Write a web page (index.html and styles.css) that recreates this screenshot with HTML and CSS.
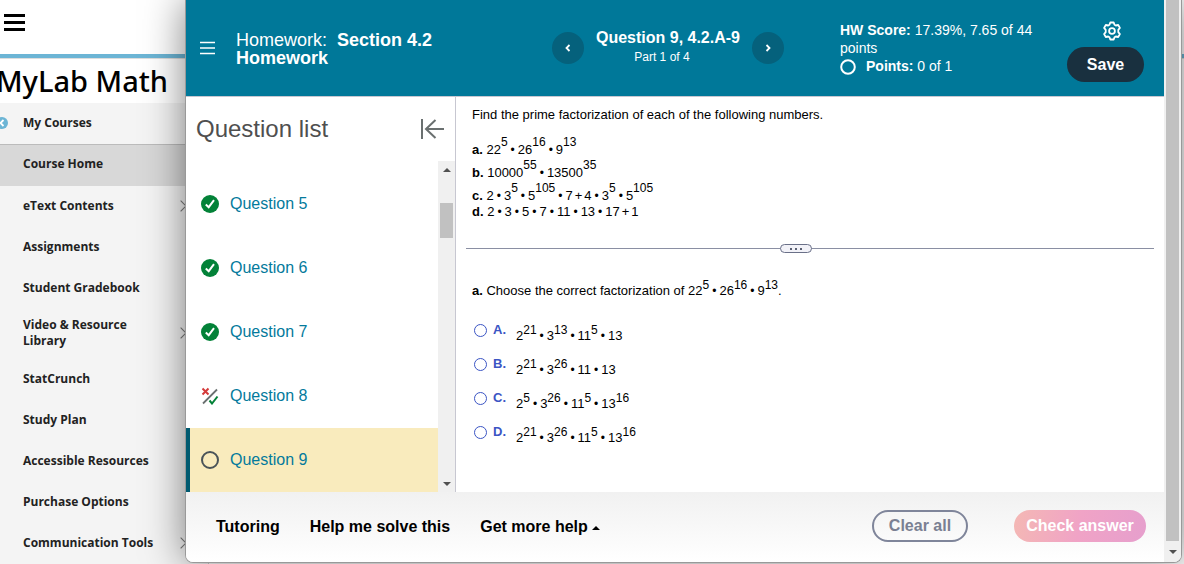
FILE: index.html
```html
<!DOCTYPE html>
<html lang="en">
<head>
  <meta charset="UTF-8">
  <meta name="viewport" content="width=device-width, initial-scale=1.0">
  <title>MyLab Math | Homework</title>
  <link rel="stylesheet" href="styles.css">
</head>
<body>
  <!-- Course site -->
  <div class="site">
    <div class="site-bar">
      <button class="site-menu" aria-label="Menu">
        <svg width="21" height="18" viewBox="0 0 21 18"><path d="M0 1.500h21M0 8.500h21M0 15.500h21" stroke="#000" stroke-width="3"/></svg>
      </button>
    </div>
    <div class="site-main">
      <div class="sidebar">
        <h2 class="brand">MyLab Math</h2>
        <nav class="side-nav">
          <a class="side-link back" href="#">
            <svg class="back-icon" width="12" height="12" viewBox="0 0 12 12"><circle cx="6" cy="6" r="6" fill="#6cb5d5"/><path d="M7.500 3L4.500 6l3 3" fill="none" stroke="#fff" stroke-width="1.800"/></svg>
            My Courses
          </a>
          <a class="side-link current" href="#">Course Home</a>
          <a class="side-link more" href="#">eText Contents</a>
          <a class="side-link" href="#">Assignments</a>
          <a class="side-link" href="#">Student Gradebook</a>
          <a class="side-link tall more" href="#">Video &amp; Resource Library</a>
          <a class="side-link" href="#">StatCrunch</a>
          <a class="side-link" href="#">Study Plan</a>
          <a class="side-link" href="#">Accessible Resources</a>
          <a class="side-link" href="#">Purchase Options</a>
          <a class="side-link more" href="#">Communication Tools</a>
        </nav>
      </div>
      <div class="site-content"></div>
    </div>
  </div>

  <!-- Homework player, opened over the course site -->
  <div class="player">
    <div class="player-body">
      <header class="player-header">
        <button class="menu-button" aria-label="Open menu">
          <svg width="15" height="14" viewBox="0 0 15 14"><path d="M0 1.500h15M0 7h15M0 12.500h15" stroke="#fff" stroke-width="1.500"/></svg>
        </button>
        <div class="hw-title">
          <h1><span>Homework:&nbsp;</span> Section 4.2 Homework</h1>
        </div>
        <div class="pager">
          <button class="round-button" aria-label="Previous question">
            <svg width="8" height="10" viewBox="0 0 8 10"><path d="M5.500 2L2.500 5l3 3" fill="none" stroke="#fff" stroke-width="1.800"/></svg>
          </button>
          <div class="pager-text">
            <strong>Question 9, 4.2.A-9</strong>
            <span>Part 1 of 4</span>
          </div>
          <button class="round-button" aria-label="Next question">
            <svg width="8" height="10" viewBox="0 0 8 10"><path d="M2.500 2l3 3-3 3" fill="none" stroke="#fff" stroke-width="1.800"/></svg>
          </button>
        </div>
        <div class="score">
          <p><strong>HW Score:</strong> 17.39%, 7.65 of 44 points</p>
          <p class="points">
            <svg width="16" height="18" viewBox="0 0 16 18"><circle cx="8" cy="10" r="6.800" fill="none" stroke="#fff" stroke-width="2"/></svg>
            <span><strong>Points:</strong> 0 of 1</span>
          </p>
        </div>
        <div class="actions">
          <button class="gear" aria-label="Settings">
            <svg width="20" height="20" viewBox="0 0 20 20" fill="none" stroke="#fff" stroke-width="1.800" stroke-linejoin="round">
              <path d="M8.300 1.500h3.400l.8 2.300 1.300.7 2.400-.5 1.700 2.900-1.600 1.900v2.400l1.600 1.900-1.700 2.900-2.400-.5-1.300.7-.8 2.300H8.300l-.8-2.300-1.300-.7-2.400.5-1.700-2.900 1.600-1.900V8.800L2.100 6.900 3.800 4l2.400.5 1.300-.7z"/>
              <circle cx="10" cy="10" r="2.900"/>
            </svg>
          </button>
          <button class="save">Save</button>
        </div>
      </header>

      <div class="workspace">
        <!-- Question list -->
        <aside class="questions">
          <div class="questions-head">
            <h2>Question list</h2>
            <button class="collapse" aria-label="Collapse question list">
              <svg width="24" height="20" viewBox="0 0 24 20" fill="none" stroke="#6a7070" stroke-width="2"><path d="M2 0v20M24 10H6M15.500 1L6 10l9.500 9"/></svg>
            </button>
          </div>
          <div class="list-wrap">
            <div class="list">
              <a class="question" href="#">
                <svg width="18" height="18" viewBox="0 0 18 18"><circle cx="9" cy="9" r="9" fill="#038238"/><path d="M4.800 9.500l2.900 2.700L13 5.200" fill="none" stroke="#fff" stroke-width="2"/></svg>
                Question 5
              </a>
              <a class="question" href="#">
                <svg width="18" height="18" viewBox="0 0 18 18"><circle cx="9" cy="9" r="9" fill="#038238"/><path d="M4.800 9.500l2.900 2.700L13 5.200" fill="none" stroke="#fff" stroke-width="2"/></svg>
                Question 6
              </a>
              <a class="question" href="#">
                <svg width="18" height="18" viewBox="0 0 18 18"><circle cx="9" cy="9" r="9" fill="#038238"/><path d="M4.800 9.500l2.900 2.700L13 5.200" fill="none" stroke="#fff" stroke-width="2"/></svg>
                Question 7
              </a>
              <a class="question" href="#">
                <svg width="18" height="18" viewBox="0 0 18 18" fill="none"><path d="M2 16.500L16 2.500" stroke="#6a7070" stroke-width="1.800"/><path d="M1.500 1.500l6 6M7.500 1.500l-6 6" stroke="#d43b3b" stroke-width="2"/><path d="M8.500 13.500l2.500 3 5.500-7" stroke="#038238" stroke-width="2"/></svg>
                Question 8
              </a>
              <a class="question active" href="#">
                <svg width="18" height="18" viewBox="0 0 18 18"><circle cx="9" cy="9" r="8" fill="none" stroke="#4a5358" stroke-width="2"/></svg>
                Question 9
              </a>
            </div>
            <div class="scrollbar list-scroll">
              <span class="arrow up"></span>
              <span class="thumb"></span>
              <span class="arrow down"></span>
            </div>
          </div>
        </aside>

        <!-- Exercise -->
        <main class="exercise">
          <p class="intro">Find the prime factorization of each of the following numbers.</p>
          <p class="part"><b>a.</b> 22<sup>5</sup><i>•</i>26<sup>16</sup><i>•</i>9<sup>13</sup></p>
          <p class="part"><b>b.</b> 10000<sup>55</sup><i>•</i>13500<sup>35</sup></p>
          <p class="part"><b>c.</b> 2<i>•</i>3<sup>5</sup><i>•</i>5<sup>105</sup><i>•</i>7<em>+</em>4<i>•</i>3<sup>5</sup><i>•</i>5<sup>105</sup></p>
          <p class="part last"><b>d.</b> 2<i>•</i>3<i>•</i>5<i>•</i>7<i>•</i>11<i>•</i>13<i>•</i>17<em>+</em>1</p>

          <div class="divider">
            <button class="handle" aria-label="Resize">
              <svg width="12" height="2" viewBox="0 0 12 2"><path d="M0 0h2v2H0zM5 0h2v2H5zM10 0h2v2h-2z" fill="#5b6173"/></svg>
            </button>
          </div>

          <p class="prompt"><b>a.</b> Choose the correct factorization of 22<sup>5</sup><i>•</i>26<sup>16</sup><i>•</i>9<sup>13</sup>.</p>

          <div class="choices">
            <label class="choice"><input type="radio" name="answer"><b>A.</b><span>2<sup>21</sup><i>•</i>3<sup>13</sup><i>•</i>11<sup>5</sup><i>•</i>13</span></label>
            <label class="choice"><input type="radio" name="answer"><b>B.</b><span>2<sup>21</sup><i>•</i>3<sup>26</sup><i>•</i>11<i>•</i>13</span></label>
            <label class="choice"><input type="radio" name="answer"><b>C.</b><span>2<sup>5</sup><i>•</i>3<sup>26</sup><i>•</i>11<sup>5</sup><i>•</i>13<sup>16</sup></span></label>
            <label class="choice"><input type="radio" name="answer"><b>D.</b><span>2<sup>21</sup><i>•</i>3<sup>26</sup><i>•</i>11<sup>5</sup><i>•</i>13<sup>16</sup></span></label>
          </div>
        </main>
      </div>

      <footer class="player-footer">
        <div class="help">
          <button class="help-button">Tutoring</button>
          <button class="help-button">Help me solve this</button>
          <button class="help-button">Get more help <span class="caret"></span></button>
        </div>
        <div class="submit">
          <button class="clear">Clear all</button>
          <button class="check">Check answer</button>
        </div>
      </footer>
    </div>
    <div class="scrollbar player-scroll">
      <span class="thumb"></span>
      <span class="arrow down"></span>
    </div>
  </div>
</body>
</html>
```
FILE: styles.css
```css
:root {
  --teal: #007899;
  --teal-dark: #005a70;
  --link: #047a9c;
  --navy: #19303f;
  --blue: #3b55c4;
  --line: #c7c7d1;
}

* {
  box-sizing: border-box;
}

body {
  margin: 0;
  height: 100vh;
  overflow: hidden;
  position: relative;
  background: #fff;
  font-family: "Liberation Sans", Arial, sans-serif;
  color: #000;
}

h1, h2, p {
  margin: 0;
}

a {
  text-decoration: none;
}

button {
  font-family: inherit;
  padding: 0;
  border: none;
  background: none;
  cursor: pointer;
}

svg {
  display: block;
  flex: none;
}

/* Course site */
.site {
  margin-left: -20px;
  height: 100vh;
  display: flex;
  flex-direction: column;
  font-family: "Open Sans", sans-serif;
}

.site-bar {
  height: 58px;
  flex: none;
  padding: 14px 24px;
  border-bottom: 4px solid #6cb5d5;
}

.site-main {
  flex: 1;
  display: flex;
  border-top: 1px solid #ddd;
}

.sidebar {
  width: 229px;
  flex: none;
  display: flex;
  flex-direction: column;
}

.brand {
  height: 44px;
  padding-left: 16px;
  font-family: "Noto Sans", sans-serif;
  font-size: 29px;
  line-height: 44px;
  font-weight: 500;
}

.side-nav {
  flex: 1;
  background: #f4f4f4;
  border-right: 1px solid #ccc;
}

.side-link {
  display: flex;
  align-items: center;
  height: 41px;
  padding: 0 80px 2px 43px;
  position: relative;
  color: #222;
  font-size: 12px;
  line-height: 16px;
  font-weight: 700;
  white-space: nowrap;
}

.side-link.tall {
  height: 50px;
  white-space: normal;
}

.side-link.current {
  height: 42px;
  padding-bottom: 4px;
  background: #d8d8d8;
  border-top: 1px solid #bbb;
}

.back-icon {
  position: absolute;
  left: 16px;
}

.side-link.more::after {
  content: "";
  position: absolute;
  right: 23px;
  width: 7px;
  height: 7px;
  border: solid #777;
  border-width: 1px 1px 0 0;
  transform: rotate(45deg);
}

.site-content {
  flex: 1;
}

/* Player window */
.player {
  position: absolute;
  top: 0;
  right: 2px;
  bottom: 1px;
  left: 185px;
  display: flex;
  overflow: hidden;
  background: #fff;
  border: 1px solid #999;
  border-top: none;
  border-radius: 0 0 8px 8px;
  box-shadow: 0 0 40px rgba(0, 0, 0, 0.5);
}

.player-body {
  flex: 1;
  min-width: 0;
  display: flex;
  flex-direction: column;
}

/* Header */
.player-header {
  height: 97px;
  flex: none;
  display: flex;
  align-items: center;
  padding: 0 20px 0 14px;
  background: var(--teal);
  border-bottom: 1px solid var(--line);
  color: #fff;
}

.hw-title {
  flex: 1;
  padding: 2px 0 0 21px;
}

.hw-title h1 {
  max-width: 210px;
  font-size: 18px;
  line-height: 18px;
}

.hw-title span {
  font-weight: 400;
}

.pager {
  display: flex;
  align-items: center;
  gap: 12px;
}

.pager-text {
  display: flex;
  flex-direction: column;
  align-items: center;
  padding-bottom: 2px;
}

.pager-text strong {
  font-size: 16px;
  line-height: 20px;
}

.pager-text span {
  padding-right: 12px;
  font-size: 12px;
  line-height: 18px;
}

.round-button {
  width: 32px;
  height: 32px;
  display: flex;
  align-items: center;
  justify-content: center;
  border-radius: 50%;
  background: #05617c;
}

.score {
  width: 227px;
  margin-left: 56px;
  padding-right: 30px;
  font-size: 14px;
  line-height: 18px;
}

.points {
  display: flex;
  align-items: center;
  gap: 10px;
}

.actions {
  align-self: flex-end;
  padding-bottom: 14px;
  display: flex;
  flex-direction: column;
  align-items: center;
  gap: 6px;
}

.save {
  width: 77px;
  height: 35px;
  border-radius: 18px;
  background: var(--navy);
  color: #fff;
  font-size: 16px;
  font-weight: 700;
}

.gear {
  margin-left: 13px;
}

/* Question list */
.workspace {
  flex: 1;
  min-height: 0;
  display: flex;
}

.questions {
  width: 270px;
  flex: none;
  display: flex;
  flex-direction: column;
  border-right: 1px solid var(--line);
}

.questions-head {
  height: 64px;
  flex: none;
  display: flex;
  align-items: center;
  justify-content: space-between;
  padding: 0 11px 0 10px;
}

.questions-head h2 {
  color: #4f4f4f;
  font-size: 24px;
  line-height: 28px;
  font-weight: 400;
}

.list-wrap {
  flex: 1;
  min-height: 0;
  display: flex;
}

.list {
  flex: 1;
  display: flex;
  flex-direction: column;
  justify-content: flex-end;
  overflow: hidden;
}

.question {
  height: 64px;
  flex: none;
  display: flex;
  align-items: center;
  gap: 11px;
  padding-left: 11px;
  border-left: 4px solid transparent;
  color: var(--link);
  font-size: 16px;
}

.question.active {
  background: #f9ebbd;
  border-left-color: var(--teal-dark);
}

/* Scrollbars */
.scrollbar {
  width: 17px;
  flex: none;
  display: flex;
  flex-direction: column;
  align-items: center;
  background: #f0f0f0;
}

.thumb {
  width: 13px;
  background: #c1c1c1;
}

.arrow {
  height: 17px;
  display: flex;
  align-items: center;
}

.arrow::before {
  content: "";
  border: 4px solid transparent;
}

.arrow.up::before {
  border-top: none;
  border-bottom-color: #505050;
}

.arrow.down::before {
  border-bottom: none;
  border-top-color: #505050;
}

.list-scroll .thumb {
  height: 35px;
  margin: 25px 0 auto;
}

.player-scroll .thumb {
  flex: 1;
}

.player-scroll .arrow {
  height: 21px;
}

/* Exercise */
.exercise {
  flex: 1;
  padding: 9px 10px 0;
  font-size: 13px;
}

.exercise p {
  padding-left: 6px;
}

.exercise b {
  font-weight: 700;
}

.exercise sup {
  font-size: 12px;
  line-height: 0;
  vertical-align: 6px;
}

.exercise .part sup {
  vertical-align: 8px;
}

.exercise i,
.exercise em {
  font-style: normal;
  line-height: 0;
  padding: 0 3px;
}

.exercise i {
  font-size: 12px;
}

.exercise em {
  padding: 0 2px;
}

.intro {
  line-height: 18px;
  margin-bottom: 14px;
}

.part {
  line-height: 23px;
}

.part.last {
  line-height: 10px;
}

.divider {
  display: flex;
  align-items: center;
  justify-content: center;
  margin: 27px 0 26px;
  background: linear-gradient(#8a8fa3, #8a8fa3) center / 100% 1px no-repeat;
}

.handle {
  width: 32px;
  height: 9px;
  margin-right: 28px;
  display: flex;
  align-items: center;
  justify-content: center;
  border: 1px solid #6a7088;
  border-radius: 5px;
  background: #f2f2f8;
}

.prompt {
  line-height: 24px;
}

.choices {
  margin-top: 14px;
  padding-left: 8px;
}

.choice {
  height: 34px;
  display: flex;
  align-items: flex-start;
  line-height: 26px;
}

.choice input {
  appearance: none;
  width: 13px;
  height: 13px;
  margin: 7px 6px 0 0;
  border: 1px solid var(--blue);
  border-radius: 50%;
  background: #fff;
}

.choice b {
  width: 23px;
  color: var(--blue);
}

.choice span {
  padding-top: 6px;
}

/* Footer */
.player-footer {
  height: 70px;
  flex: none;
  display: flex;
  align-items: center;
  justify-content: space-between;
  padding: 0 18px 2px 30px;
  background: linear-gradient(#f1f1f1, #fff);
}

.help {
  display: flex;
  gap: 30px;
  padding-top: 2px;
}

.help-button {
  font-size: 16px;
  font-weight: 700;
}

.caret {
  display: inline-block;
  vertical-align: 2px;
  border: 4px solid transparent;
  border-top: none;
  border-bottom-color: #000;
}

.submit {
  display: flex;
  gap: 46px;
}

.clear,
.check {
  height: 32px;
  border-radius: 16px;
  font-size: 16px;
  font-weight: 700;
}

.clear {
  width: 96px;
  border: 2px solid #7f859a;
  color: #7a8092;
}

.check {
  width: 132px;
  background: linear-gradient(100deg, #f4b8b4, #f0a3c6 50%, #e69fcd);
  color: #fff;
}
```
